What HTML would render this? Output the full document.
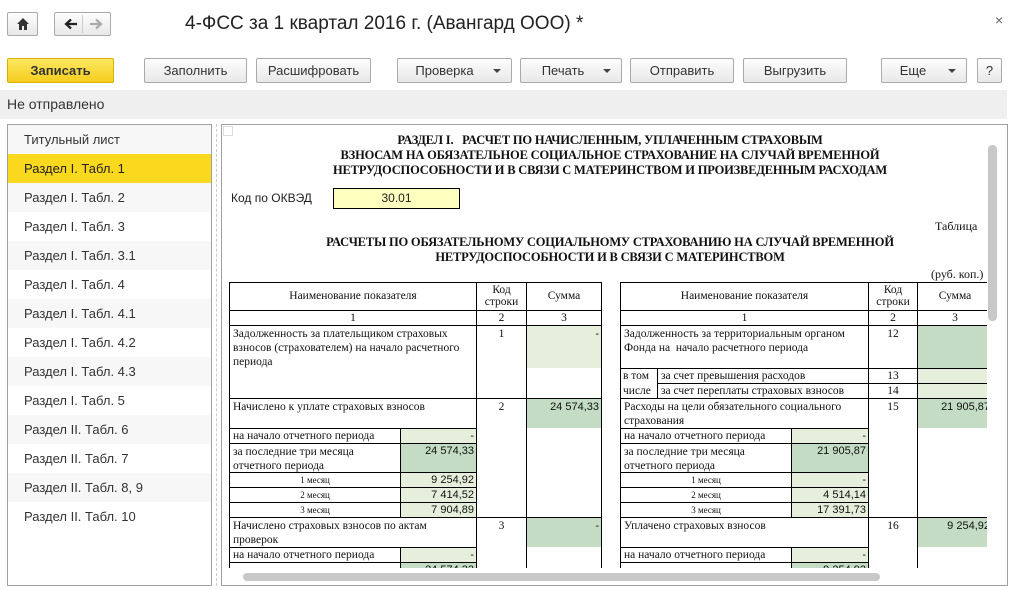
<!DOCTYPE html>
<html><head><meta charset="utf-8"><style>
*{margin:0;padding:0;box-sizing:border-box}
body{width:1017px;height:590px;overflow:hidden;background:#fff;font-family:"Liberation Sans",sans-serif;position:relative;color:#333}
.a{position:absolute}
.btn{position:absolute;height:25px;border:1px solid #aaa;border-radius:2px;background:linear-gradient(#fdfdfd,#e8e8e8);font-size:13px;color:#333;text-align:center;line-height:23px}
.dd::after{content:"";position:absolute;right:10px;top:10px;border-left:4px solid transparent;border-right:4px solid transparent;border-top:4px solid #444}
.side div{height:29px;line-height:29px;padding-left:16px;font-size:13px;color:#333}
.c{position:absolute;border:1px solid #000;font:11.5px/14px "Liberation Serif",serif;color:#111;padding:1px 3px;background:#fff}
.ct{text-align:center}
.r{text-align:right;font-family:"Liberation Sans",sans-serif;font-size:11px}
.g1{background:#e6efdc}
.g2{background:#c3dcc3}
.hd{font:bold 12.5px/15px "Liberation Serif",serif;color:#111;text-align:center;letter-spacing:-0.2px;white-space:nowrap}
</style></head><body>
<div class="btn" style="left:7px;top:12px;width:31px;height:24px"><svg width="14" height="14" viewBox="0 0 14 14" style="margin-top:4px"><path d="M7 1L1 7h2v6h3V9h2v4h3V7h2z" fill="#333"/></svg></div>
<div class="btn" style="left:54px;top:12px;width:57px;height:24px">
<svg width="14" height="12" viewBox="0 0 14 12" style="position:absolute;left:9px;top:5px"><path d="M13 6H3M7 1.5L2 6l5 4.5" stroke="#222" stroke-width="2.2" fill="none"/></svg>
<span style="position:absolute;left:27px;top:2px;bottom:2px;border-left:1px solid #ccc"></span>
<svg width="14" height="12" viewBox="0 0 14 12" style="position:absolute;left:34px;top:5px"><path d="M1 6h10M7 1.5L12 6l-5 4.5" stroke="#aaa" stroke-width="2.2" fill="none"/></svg></div>
<div class="a" style="left:185px;top:13px;font-size:19px;color:#222">4-ФСС за 1 квартал 2016 г. (Авангард ООО) *</div>
<div class="a" style="left:995px;top:12px;font-size:14px;color:#666">×</div>
<div class="btn" style="left:7px;top:58px;width:107px;background:linear-gradient(#fde860,#f5cd1e);border-color:#d9b200;font-weight:bold;color:#333">Записать</div>
<div class="btn" style="left:144px;top:58px;width:103px">Заполнить</div>
<div class="btn" style="left:256px;top:58px;width:115px">Расшифровать</div>
<div class="btn dd" style="left:397px;top:58px;width:115px;padding-right:20px">Проверка</div>
<div class="btn dd" style="left:520px;top:58px;width:102px;padding-right:16px">Печать</div>
<div class="btn" style="left:630px;top:58px;width:104px">Отправить</div>
<div class="btn" style="left:743px;top:58px;width:104px">Выгрузить</div>
<div class="btn dd" style="left:881px;top:58px;width:86px;padding-right:22px">Еще</div>
<div class="btn" style="left:977px;top:58px;width:25px">?</div>
<div class="a" style="left:0;top:90px;width:1007px;height:29px;background:#efefef;font-size:14px;line-height:29px;padding-left:7px;color:#333">Не отправлено</div>
<div class="a side" style="left:7px;top:124px;width:205px;height:462px;border:1px solid #a0a0a0;overflow:hidden">
<div style="background:#f7f7f7">Титульный лист</div>
<div style="background:#fad81e;color:#222">Раздел I. Табл. 1</div>
<div style="background:#f7f7f7">Раздел I. Табл. 2</div>
<div>Раздел I. Табл. 3</div>
<div style="background:#f7f7f7">Раздел I. Табл. 3.1</div>
<div>Раздел I. Табл. 4</div>
<div style="background:#f7f7f7">Раздел I. Табл. 4.1</div>
<div>Раздел I. Табл. 4.2</div>
<div style="background:#f7f7f7">Раздел I. Табл. 4.3</div>
<div>Раздел I. Табл. 5</div>
<div style="background:#f7f7f7">Раздел II. Табл. 6</div>
<div>Раздел II. Табл. 7</div>
<div style="background:#f7f7f7">Раздел II. Табл. 8, 9</div>
<div>Раздел II. Табл. 10</div>
</div>
<div class="a" style="left:216px;top:124px;height:462px;border-left:1px dashed #ccc"></div>
<div class="a" style="left:221px;top:124px;width:787px;height:462px;border:1px solid #a0a0a0"></div>
<div class="a" style="left:222px;top:125px;width:765px;height:443px;overflow:hidden">
<div style="position:absolute;left:-222px;top:-125px;width:1017px;height:590px">
<div class="a hd" style="left:310px;top:133px;width:600px">РАЗДЕЛ I.&nbsp;&nbsp; РАСЧЕТ ПО НАЧИСЛЕННЫМ, УПЛАЧЕННЫМ СТРАХОВЫМ<br>ВЗНОСАМ НА ОБЯЗАТЕЛЬНОЕ СОЦИАЛЬНОЕ СТРАХОВАНИЕ НА СЛУЧАЙ ВРЕМЕННОЙ<br>НЕТРУДОСПОСОБНОСТИ И В СВЯЗИ С МАТЕРИНСТВОМ И ПРОИЗВЕДЕННЫМ РАСХОДАМ</div>
<div class="a" style="left:231px;top:191px;font-size:12px;color:#222">Код по ОКВЭД</div>
<div class="a" style="left:333px;top:188px;width:127px;height:21px;border:1px solid #000;background:#ffffc0;font-size:12px;text-align:center;line-height:19px;color:#222">30.01</div>
<div class="a" style="left:935px;top:219px;font:12px 'Liberation Serif',serif;color:#111">Таблица</div>
<div class="a hd" style="left:290px;top:235px;width:640px">РАСЧЕТЫ ПО ОБЯЗАТЕЛЬНОМУ СОЦИАЛЬНОМУ СТРАХОВАНИЮ НА СЛУЧАЙ ВРЕМЕННОЙ<br>НЕТРУДОСПОСОБНОСТИ И В СВЯЗИ С МАТЕРИНСТВОМ</div>
<div class="a" style="left:931px;top:267px;font:12px 'Liberation Serif',serif;color:#111">(руб. коп.)</div>

<div class="c ct" style="left:229px;top:282px;width:248px;height:29px;line-height:25px">Наименование показателя</div>
<div class="c ct" style="left:476px;top:282px;width:51px;height:29px;line-height:12px">Код<br>строки</div>
<div class="c ct" style="left:526px;top:282px;width:76px;height:29px;line-height:25px">Сумма</div>
<div class="c ct" style="left:229px;top:310px;width:248px;height:16px;padding:0">1</div>
<div class="c ct" style="left:476px;top:310px;width:51px;height:16px;padding:0">2</div>
<div class="c ct" style="left:526px;top:310px;width:76px;height:16px;padding:0">3</div>
<div class="c" style="left:229px;top:325px;width:248px;height:74px">Задолженность за плательщиком страховых взносов (страхователем) на начало расчетного периода</div>
<div class="c ct" style="left:476px;top:325px;width:51px;height:74px">1</div>
<div class="c" style="left:526px;top:325px;width:76px;height:74px;padding:0"><div class="g1 r" style="height:42px;padding:1px 2px">-</div></div>
<div class="c" style="left:229px;top:398px;width:248px;height:31px">Начислено к уплате страховых взносов</div>
<div class="c ct" style="left:476px;top:398px;width:51px;height:120px">2</div>
<div class="c" style="left:526px;top:398px;width:76px;height:120px;padding:0"><div class="g2 r" style="height:29px;padding:1px 2px">24 574,33</div></div>
<div class="c" style="left:229px;top:428px;width:172px;height:16px;padding-top:0">на начало отчетного периода</div>
<div class="c g1 r" style="left:400px;top:428px;width:77px;height:16px;padding:0 2px">-</div>
<div class="c" style="left:229px;top:443px;width:172px;height:30px">за последние три месяца отчетного периода</div>
<div class="c g2 r" style="left:400px;top:443px;width:77px;height:30px;padding:0 2px">24 574,33</div>
<div class="c ct" style="left:229px;top:472px;width:172px;height:16px;padding:0;font-size:9px">1 месяц</div>
<div class="c g1 r" style="left:400px;top:472px;width:77px;height:16px;padding:0 2px">9 254,92</div>
<div class="c ct" style="left:229px;top:487px;width:172px;height:16px;padding:0;font-size:9px">2 месяц</div>
<div class="c g1 r" style="left:400px;top:487px;width:77px;height:16px;padding:0 2px">7 414,52</div>
<div class="c ct" style="left:229px;top:502px;width:172px;height:16px;padding:0;font-size:9px">3 месяц</div>
<div class="c g1 r" style="left:400px;top:502px;width:77px;height:16px;padding:0 2px">7 904,89</div>
<div class="c" style="left:229px;top:517px;width:248px;height:31px;padding-right:40px">Начислено страховых взносов по актам проверок</div>
<div class="c ct" style="left:476px;top:517px;width:51px;height:70px">3</div>
<div class="c" style="left:526px;top:517px;width:76px;height:70px;padding:0"><div class="g2 r" style="height:29px;padding:1px 2px">-</div></div>
<div class="c" style="left:229px;top:547px;width:172px;height:16px;padding-top:0">на начало отчетного периода</div>
<div class="c g1 r" style="left:400px;top:547px;width:77px;height:16px;padding:0 2px">-</div>
<div class="c" style="left:229px;top:562px;width:172px;height:30px">за последние три месяца</div>
<div class="c g2 r" style="left:400px;top:562px;width:77px;height:30px;padding:0 2px">24 574,33</div>

<div class="c ct" style="left:620px;top:282px;width:249px;height:29px;line-height:25px">Наименование показателя</div>
<div class="c ct" style="left:868px;top:282px;width:50px;height:29px;line-height:12px">Код<br>строки</div>
<div class="c ct" style="left:917px;top:282px;width:76px;height:29px;line-height:25px">Сумма</div>
<div class="c ct" style="left:620px;top:310px;width:249px;height:16px;padding:0">1</div>
<div class="c ct" style="left:868px;top:310px;width:50px;height:16px;padding:0">2</div>
<div class="c ct" style="left:917px;top:310px;width:76px;height:16px;padding:0">3</div>
<div class="c" style="left:620px;top:325px;width:249px;height:44px">Задолженность за территориальным органом Фонда на&nbsp; начало расчетного периода</div>
<div class="c ct" style="left:868px;top:325px;width:50px;height:44px">12</div>
<div class="c g2" style="left:917px;top:325px;width:76px;height:44px"></div>
<div class="c" style="left:620px;top:368px;width:38px;height:31px;line-height:15px;padding:0 2px">в том<br>числе</div>
<div class="c" style="left:657px;top:368px;width:212px;height:16px;padding-top:0">за счет превышения расходов</div>
<div class="c" style="left:657px;top:383px;width:212px;height:16px;padding-top:0">за счет переплаты страховых взносов</div>
<div class="c ct" style="left:868px;top:368px;width:50px;height:16px;padding:0">13</div>
<div class="c ct" style="left:868px;top:383px;width:50px;height:16px;padding:0">14</div>
<div class="c g1" style="left:917px;top:368px;width:76px;height:16px"></div>
<div class="c g1" style="left:917px;top:383px;width:76px;height:16px"></div>
<div class="c" style="left:620px;top:398px;width:249px;height:31px">Расходы на цели обязательного социального страхования</div>
<div class="c ct" style="left:868px;top:398px;width:50px;height:120px">15</div>
<div class="c" style="left:917px;top:398px;width:76px;height:120px;padding:0"><div class="g2 r" style="height:29px;padding:1px 2px;white-space:nowrap">21 905,87</div></div>
<div class="c" style="left:620px;top:428px;width:172px;height:16px;padding-top:0">на начало отчетного периода</div>
<div class="c g1 r" style="left:791px;top:428px;width:78px;height:16px;padding:0 2px">-</div>
<div class="c" style="left:620px;top:443px;width:172px;height:30px">за последние три месяца отчетного периода</div>
<div class="c g2 r" style="left:791px;top:443px;width:78px;height:30px;padding:0 2px">21 905,87</div>
<div class="c ct" style="left:620px;top:472px;width:172px;height:16px;padding:0;font-size:9px">1 месяц</div>
<div class="c g1 r" style="left:791px;top:472px;width:78px;height:16px;padding:0 2px">-</div>
<div class="c ct" style="left:620px;top:487px;width:172px;height:16px;padding:0;font-size:9px">2 месяц</div>
<div class="c g1 r" style="left:791px;top:487px;width:78px;height:16px;padding:0 2px">4 514,14</div>
<div class="c ct" style="left:620px;top:502px;width:172px;height:16px;padding:0;font-size:9px">3 месяц</div>
<div class="c g1 r" style="left:791px;top:502px;width:78px;height:16px;padding:0 2px">17 391,73</div>
<div class="c" style="left:620px;top:517px;width:249px;height:31px">Уплачено страховых взносов</div>
<div class="c ct" style="left:868px;top:517px;width:50px;height:70px">16</div>
<div class="c" style="left:917px;top:517px;width:76px;height:70px;padding:0"><div class="g2 r" style="height:29px;padding:1px 2px;white-space:nowrap">9 254,92</div></div>
<div class="c" style="left:620px;top:547px;width:172px;height:16px;padding-top:0">на начало отчетного периода</div>
<div class="c g1 r" style="left:791px;top:547px;width:78px;height:16px;padding:0 2px">-</div>
<div class="c" style="left:620px;top:562px;width:172px;height:30px">за последние три месяца</div>
<div class="c g2 r" style="left:791px;top:562px;width:78px;height:30px;padding:0 2px">9 254,92</div>
</div></div>
<div class="a" style="left:988px;top:145px;width:9px;height:176px;background:#c8c8c8;border-radius:4px"></div>
<div class="a" style="left:243px;top:573px;width:637px;height:8px;background:#c8c8c8;border-radius:4px"></div>
<div class="a" style="left:223px;top:126px;width:10px;height:10px;border:1px solid #ddd"></div>
</body></html>
